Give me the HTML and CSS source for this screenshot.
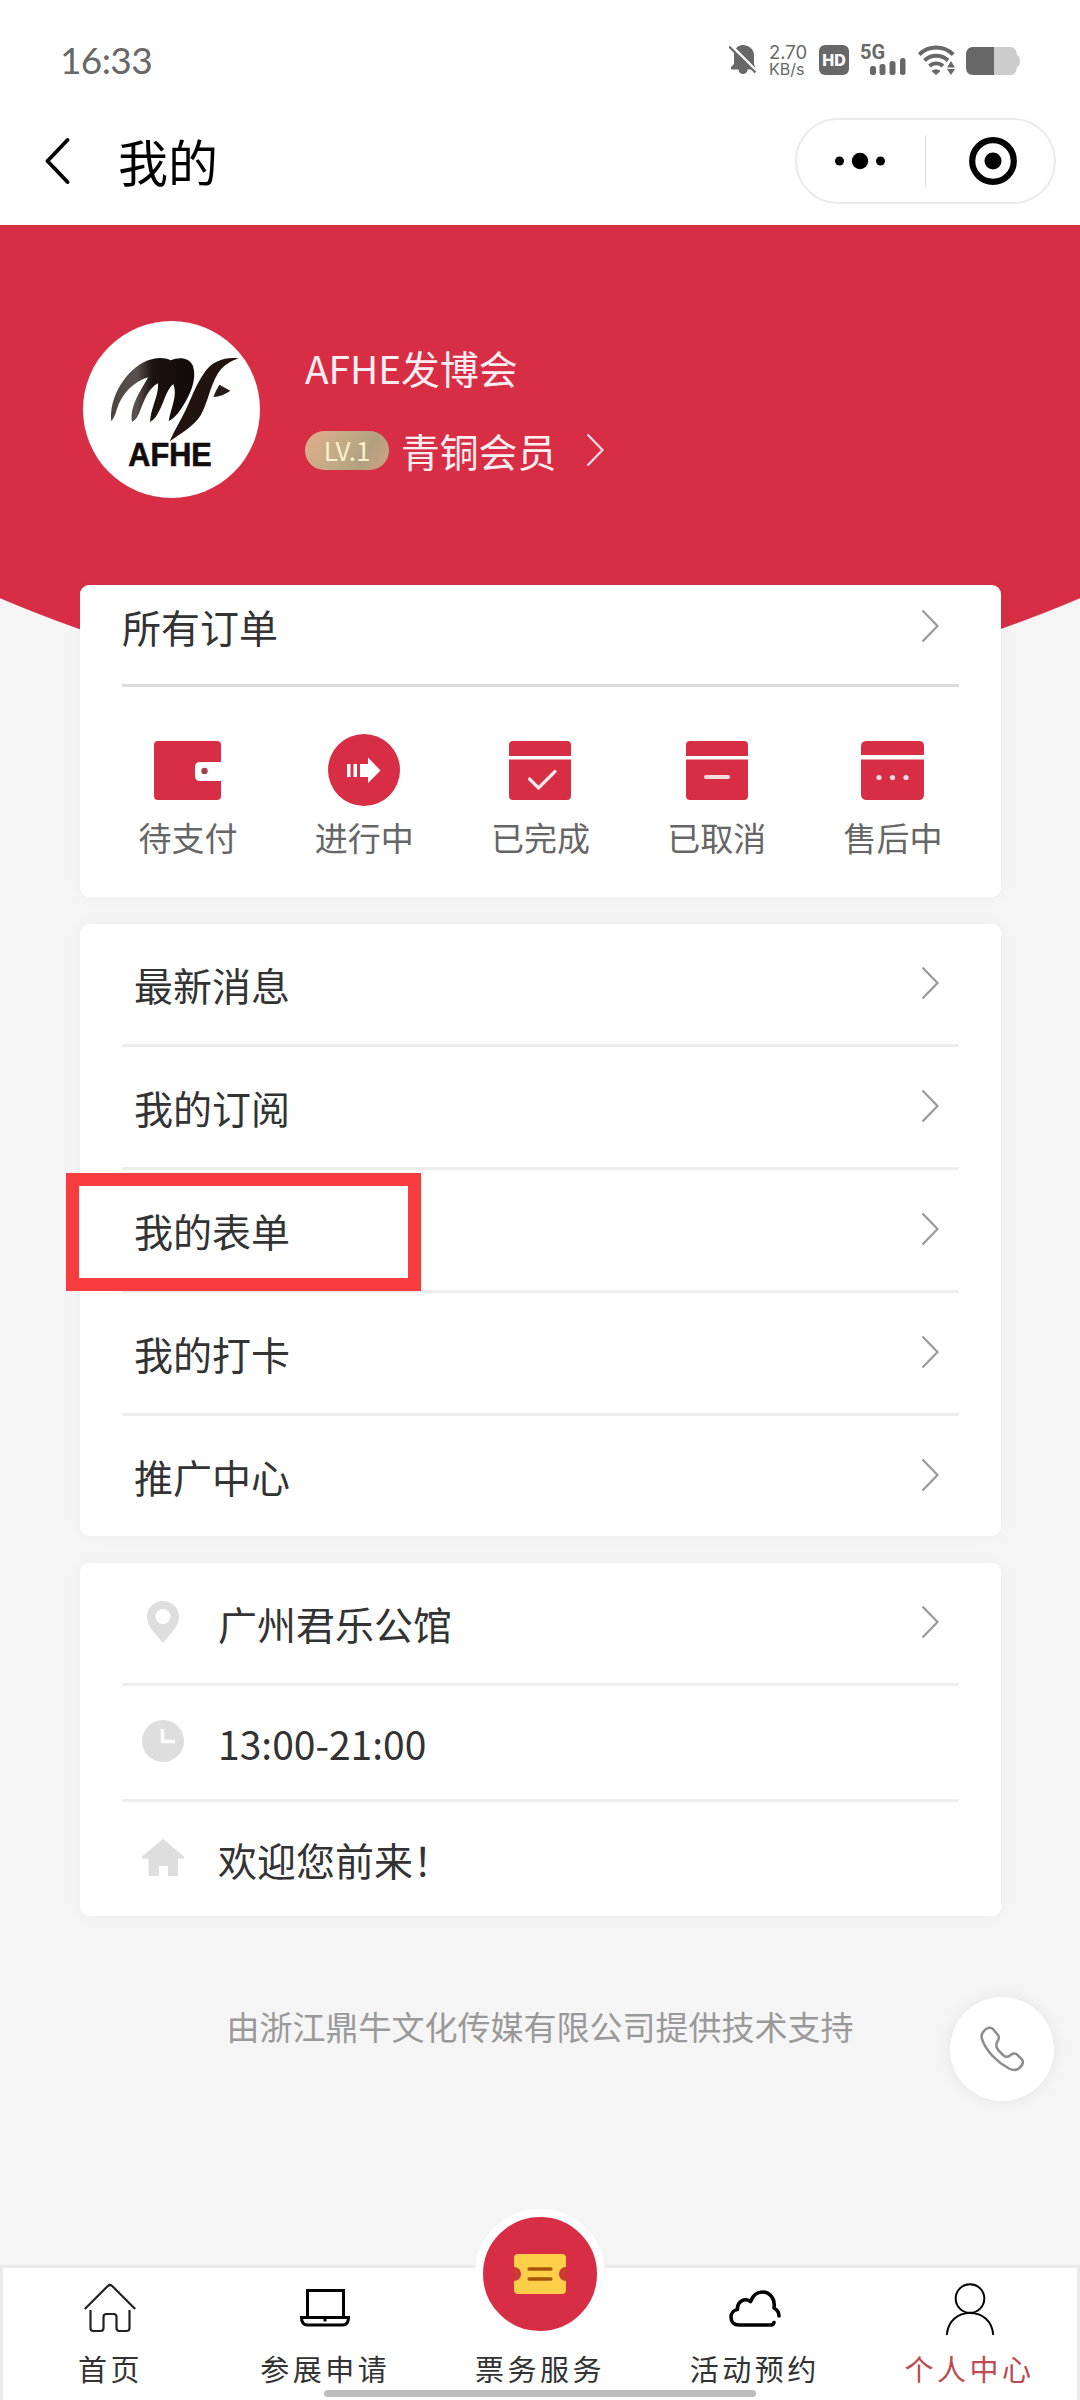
FILE: index.html
```html
<!DOCTYPE html>
<html lang="zh-CN">
<head>
<meta charset="utf-8">
<title>我的</title>
<link rel="stylesheet" href="styles.css">
</head>
<body>
<svg class="sprite" width="0" height="0">
  <symbol id="chevron" viewBox="0 0 18 34"><path d="M1.5 1.5 16.5 17 1.5 32.5" fill="none" stroke="currentColor" stroke-width="2.200"/></symbol>
</svg>
<div class="page">
  <header class="status">
    <span class="clock">16:33</span>
    <div class="indicators">
      <svg class="bell" width="28" height="32" viewBox="0 0 28 32"><path d="M2 25.500V23l3-3V10.500C5 5 9 1 14 1s11 4 11 9.500V20l1 3v2.500H18.500a4.500 4.500 0 0 1-9 0z" fill="#686868"/><path d="M0-.5 29 28.500" stroke="#fff" stroke-width="3"/><path d="M0 2.500 26.500 28.500" stroke="#686868" stroke-width="2.200"/></svg>
      <div class="speed"><span class="rate">2.70</span><span class="unit">KB/s</span></div>
      <span class="hd">HD</span>
      <div class="cell">
        <span class="gen">5G</span>
        <svg class="bars" width="36" height="17" viewBox="0 0 36 17" fill="#686868"><rect x="0" y="8" width="6" height="9" rx="2.500"/><rect x="9.500" y="6" width="6" height="11" rx="2.500"/><rect x="19.500" y="3" width="6" height="14" rx="2.500"/><rect x="30" y="0" width="5.500" height="17" rx="2.500"/></svg>
      </div>
      <svg class="wifi" width="37" height="30" viewBox="0 0 37 30"><g fill="none" stroke="#686868" stroke-width="3.900"><path d="M1.200 9.500a24 24 0 0 1 34 0"/><path d="M6.500 15.500a17 17 0 0 1 23.500 0"/><path d="M11.500 21a10 10 0 0 1 13.500 0"/></g><path d="M13.500 26a7 7 0 0 1 9 0L18 30z" fill="#686868"/><path d="M29 22.500 33 16l4 6.500zM29 24h8l-4 6z" fill="#686868"/></svg>
      <svg class="battery" width="54" height="28" viewBox="0 0 54 28"><path d="M28 0h17q5 0 6 8 3 1 3 6t-3 6q-1 8-6 8H28z" fill="#ccc"/><path d="M28 0H7Q0 0 0 8v12q0 8 7 8h21z" fill="#686868"/></svg>
    </div>
  </header>
  <nav class="titlebar">
    <svg class="back" width="26" height="48" viewBox="0 0 26 48"><path d="M22.500 3 2.500 24l20 21" fill="none" stroke="#000" stroke-width="3.800" stroke-linecap="round" stroke-linejoin="round"/></svg>
    <h1>我的</h1>
    <div class="capsule">
      <svg class="more" width="50" height="18" viewBox="0 0 50 18"><circle cx="4.500" cy="9" r="4.500"/><circle cx="25" cy="9" r="8.200"/><circle cx="45.500" cy="9" r="4.500"/></svg>
      <i class="split"></i>
      <svg class="target" width="48" height="48" viewBox="0 0 48 48"><circle cx="24" cy="24" r="20.800" fill="none" stroke="#000" stroke-width="6.200"/><circle cx="24" cy="24" r="8.500"/></svg>
    </div>
  </nav>
  <main>
    <section class="profile">
      <svg class="avatar" width="177" height="177" viewBox="21 17 531 531">
        <defs><linearGradient id="ink" x1="0" y1="0" x2="1" y2="0"><stop offset="0" stop-color="#4a4440"/><stop offset=".3" stop-color="#5a524e"/><stop offset=".5" stop-color="#1c1210"/><stop offset="1" stop-color="#120a08"/></linearGradient></defs>
        <circle cx="286.500" cy="282.500" r="265.500" fill="#fff"/>
        <path d="M106 318C98 250 145 172 200 142C232 126 262 124 284 135C308 124 340 126 350 150C362 184 350 222 328 260C314 284 298 308 278 317C284 280 306 240 292 206C272 222 266 254 252 282C244 301 234 314 222 320C222 286 250 236 246 204C218 218 206 252 193 284C186 304 178 316 168 319C160 272 196 224 216 186C172 200 136 236 122 284Q116 306 106 318Z" fill="url(#ink)"/>
        <path d="M488 129C446 124 410 138 388 168C358 210 348 246 330 282C314 316 296 344 281 378C314 356 354 332 374 300C396 262 402 212 426 174C442 150 462 138 488 129Z" fill="#201310"/>
        <path d="M430 208 463 226Q440 243 412 245 419 226 430 208Z" fill="#251b18"/>
        <text x="157" y="453" class="brand" textLength="250" lengthAdjust="spacingAndGlyphs">AFHE</text>
      </svg>
      <div class="member">
        <div class="name">AFHE发博会</div>
        <div class="rank"><span class="level">LV.1</span><span>青铜会员</span><svg class="go" width="18" height="34"><use href="#chevron"/></svg></div>
      </div>
    </section>

    <section class="card orders">
      <div class="orders-head"><span>所有订单</span><svg class="go" width="18" height="34"><use href="#chevron"/></svg></div>
      <div class="states">
        <div class="state"><svg width="80" height="80" viewBox="0 0 80 80"><path d="M11 11h58q4 0 4 4v17H52q-5 0-5 5v9q0 5 5 5h21v15q0 4-4 4H10q-4 0-4-4V15q0-4 4-4z" fill="#d72e45"/><circle cx="56.500" cy="41" r="3.200" fill="#a53d51"/></svg><span>待支付</span></div>
        <div class="state"><svg width="80" height="80" viewBox="0 0 80 80"><circle cx="40" cy="40" r="36" fill="#d72e45"/><path d="M23 34h3.500v13H23zM29.500 34H33v13h-3.500zM36 34h8v-6.500L56.500 40.500 44 53v-6h-8z" fill="#fff"/></svg><span>进行中</span></div>
        <div class="state"><svg width="80" height="80" viewBox="0 0 80 80"><path d="M13 11h54q4 0 4 4v11H9V15q0-4 4-4zM9 29.500h62V66q0 4-4 4H13q-4 0-4-4z" fill="#d72e45"/><path d="m29.500 49 9 9L55 41.500" fill="none" stroke="#ffe9ee" stroke-width="3.200" stroke-linecap="round"/></svg><span>已完成</span></div>
        <div class="state"><svg width="80" height="80" viewBox="0 0 80 80"><path d="M13 11h54q4 0 4 4v11H9V15q0-4 4-4zM9 29.500h62V66q0 4-4 4H13q-4 0-4-4z" fill="#d72e45"/><path d="M29 47h22" stroke="#ffd9e0" stroke-width="4" stroke-linecap="round"/></svg><span>已取消</span></div>
        <div class="state"><svg width="80" height="80" viewBox="0 0 80 80"><path d="M14 11h52q5 0 5 5v9H8v-9q0-5 6-5zM8 29.500h63V64q0 6-5 6H14q-6 0-6-6z" fill="#d72e45"/><g fill="#ffd9e0"><circle cx="26" cy="47.500" r="2.600"/><circle cx="39.500" cy="47.500" r="2.600"/><circle cx="53" cy="47.500" r="2.600"/></g></svg><span>售后中</span></div>
      </div>
    </section>

    <section class="card menu">
      <div class="row"><span class="label">最新消息</span><svg class="go" width="18" height="34"><use href="#chevron"/></svg></div>
      <div class="row"><span class="label">我的订阅</span><svg class="go" width="18" height="34"><use href="#chevron"/></svg></div>
      <div class="row marked"><span class="label">我的表单</span><svg class="go" width="18" height="34"><use href="#chevron"/></svg></div>
      <div class="row"><span class="label">我的打卡</span><svg class="go" width="18" height="34"><use href="#chevron"/></svg></div>
      <div class="row"><span class="label">推广中心</span><svg class="go" width="18" height="34"><use href="#chevron"/></svg></div>
    </section>

    <section class="card info">
      <div class="row"><svg class="mark" width="42" height="42" viewBox="0 0 42 42"><path fill-rule="evenodd" d="M21 0c9 0 16 7 16 15.500C37 26 28 33 21 42 14 33 5 26 5 15.500 5 7 12 0 21 0zm0 8a7.500 7.500 0 1 0 0 15 7.500 7.500 0 0 0 0-15z"/></svg><span class="label">广州君乐公馆</span><svg class="go" width="18" height="34"><use href="#chevron"/></svg></div>
      <div class="row"><svg class="mark" width="42" height="42" viewBox="0 0 42 42"><circle cx="21" cy="21" r="21"/><path d="M20.500 9v12.500H33" fill="none" stroke="#fff" stroke-width="3.500"/></svg><span class="label">13:00-21:00</span></div>
      <div class="row"><svg class="mark" width="42" height="42" viewBox="0 0 42 42"><path d="M21 2 42 19.500v2h-6V39H26V29h-9v10H6.500V21.500H0v-2z"/></svg><span class="label">欢迎您前来！</span></div>
    </section>

    <p class="support">由浙江鼎牛文化传媒有限公司提供技术支持</p>
  </main>

  <footer class="tabs">
    <div class="tab"><svg width="52" height="52" viewBox="0 0 52 52" fill="none" stroke="#222" stroke-width="2.200"><path d="M.8 26 23.800 3q2.200-2 4.400 0l23 23"/><path d="M6.500 27v18q0 3 3 3h7q3 0 3-3V34q0-3 3-3h7q3 0 3 3v11q0 3 3 3h7q3 0 3-3V27"/></svg><span>首页</span></div>
    <div class="tab"><svg width="52" height="52" viewBox="0 0 52 52" fill="none" stroke="#000" stroke-width="3"><path d="M8.500 34V7.500h36V34"/><path d="M2.500 34.500h47q0 7.500-6 7.500h-35q-6 0-6-7.500z"/><path d="M26 34v4.500" stroke-width="3"/></svg><span>参展申请</span></div>
    <div class="tab tickets"><div class="bubble"><svg width="52" height="40" viewBox="0 0 52 40"><path d="M4 0h44q4 0 4 4v9a6.500 6.500 0 0 0 0 14v9q0 4-4 4H4q-4 0-4-4v-9a6.500 6.500 0 0 0 0-14V4q0-4 4-4z" fill="#ffcf4a"/><path d="M0 14.500q6 5.500 0 11M52 14.500q-6 5.500 0 11" fill="#d72e45" stroke="#b5540f" stroke-width="2"/><path d="M15 15h22M15 25h22" stroke="#a8560c" stroke-width="3.300" stroke-linecap="round"/></svg></div><span>票务服务</span></div>
    <div class="tab"><svg width="52" height="52" viewBox="0 0 52 52" fill="none" stroke="#000" stroke-width="3.600" stroke-linecap="round" stroke-linejoin="round"><path d="M45 39.500q-.5 2.500-3 2.500H10c-5 0-8-3-8-8 0-4 3-7 6.500-7.500C8 18 16 14.500 21.500 18.500 24 12 29 9 33.500 9 41 9 46.500 16 45 25q5 3 5 8"/></svg><span>活动预约</span></div>
    <div class="tab active"><svg width="52" height="52" viewBox="0 0 52 52" fill="none" stroke="#000" stroke-width="2"><circle cx="26" cy="15.500" r="14.300"/><path d="M2.800 52c1-14 11-22 23.200-22s22.500 8 23.200 22"/></svg><span>个人中心</span></div>
  </footer>
  <button class="phone" aria-label="电话"><svg width="44" height="46" viewBox="0 0 44 46"><path d="M4 5C7 1 11 1 13 3l5 6c1.500 2 1 4-.5 6.500-2 3-2 5.500 1 9l5 5c2.500 2 4 2 6.500 0 2.500-2.500 5-2.500 7-1l5 5c1.500 2 1 5-2 8-3 3-7 3-11 1C17 36 6 25 2 13 1 10 2 7 4 5z" fill="none" stroke="#8e8e8e" stroke-width="2.500"/></svg></button>
  <i class="home-indicator"></i>
</div>
</body>
</html>
```
FILE: styles.css
```css
*, *::before { box-sizing: border-box; }
body { margin: 0; background: #f5f5f5; font-family: "Noto Sans CJK SC", sans-serif; color: #333; }
svg { display: block; flex: none; }
.sprite { position: absolute; }
.page { position: relative; width: 1080px; height: 2400px; display: flex; flex-direction: column; overflow: hidden; }

.status { height: 100px; padding: 20px 60px 0; background: #fff; display: flex; justify-content: space-between; align-items: center; color: #686868; }
.clock { font: 37px/40px Lato, sans-serif; letter-spacing: -.6px; }
.indicators { display: flex; align-items: center; height: 32px; }
.speed { display: flex; flex-direction: column; margin-left: 12px; width: 38px; font-family: Inter, sans-serif; }
.rate { font-size: 18.500px; line-height: 17px; }
.unit { font-size: 16px; line-height: 16px; }
.hd { margin-left: 12px; width: 30px; height: 30px; border-radius: 6px; background: #686868; color: #fff; font: 800 16px/30px Inter, sans-serif; text-align: center; }
.cell { margin-left: 11px; width: 46px; height: 32px; }
.gen { display: block; font: 700 20px/16px Roboto, sans-serif; height: 14px; }
.bars { margin-left: 10px; }
.wifi { margin-left: 12px; }
.battery { margin: 2px 0 0 11px; }

.titlebar { height: 125px; padding: 0 24px 3px 45px; background: #fff; display: flex; align-items: center; }
h1 { margin: 0 auto 3px 47px; font-size: 50px; line-height: 60px; font-weight: 400; color: #000; }
.capsule { width: 261px; height: 86px; border: 2px solid #ebebeb; border-radius: 43px; display: flex; align-items: center; padding: 0 37px 0 38px; justify-content: space-between; }
.split { width: 1px; height: 52px; background: #ddd; margin: 0 4px 0 0; }

main { flex: 1; background: radial-gradient(circle at 540px -900px, #d72e45 1382.500px, #f5f5f5 1383.500px); }
.profile { height: 360px; padding: 96px 83px 0; display: flex; align-items: flex-start; gap: 45px; color: #ffeef1; }
.brand { font: 700 98px "Liberation Sans", Arial, sans-serif; fill: #120c0c; stroke: #120c0c; stroke-width: 2px; }
.member { height: 174px; display: flex; flex-direction: column; justify-content: center; gap: 33px; font-size: 38.800px; line-height: 50px; }
.rank { display: flex; align-items: center; }
.level { width: 84px; height: 39px; margin: 2px 12px 0 0; border-radius: 20px; background: linear-gradient(120deg, #e0ac8c, #c2aa86 45%, #b0a07f 70%, #cfa283); color: #fbf0cf; font-size: 26px; line-height: 37px; text-align: center; }
.rank .go { margin-left: 30px; }

.card { width: 921px; margin-left: 80px; background: #fff; border-radius: 9px; box-shadow: 0 0 16px rgba(0, 0, 0, .035); font-size: 39px; line-height: 50px; }
.go { color: #999; }
.profile .go { color: #ffdfe5; }
.orders { height: 312px; }
.orders-head { margin: 0 42px; padding: 0 20px 17px 0; height: 102px; border-bottom: 3px solid #ddd; display: flex; justify-content: space-between; align-items: center; }
.states { padding: 43px 20px 0; display: grid; grid-template-columns: repeat(5, 1fr); }
.state { display: flex; flex-direction: column; align-items: center; gap: 7px; color: #666; font-size: 33px; line-height: 40px; }

.menu { margin-top: 27px; height: 612px; }
.row { margin: 0 42px; padding: 0 20px 0 12px; height: 123px; border-bottom: 3px solid #ededed; display: flex; align-items: center; }
.label { margin-right: auto; }
.row .go { margin-top: -3px; }
.row:last-child { border: 0; height: 120px; }
.marked { position: relative; }
.marked::before { content: ""; position: absolute; left: -56px; top: 3px; width: 355px; height: 118px; border: 13px solid #f93c40; }
.info { margin-top: 27px; height: 353px; }
.info .row { padding-left: 20px; gap: 34px; }
.info .row:nth-child(2) { height: 116px; }
.info .row:last-child { height: 114px; }
.mark { fill: #dedede; margin-top: -3px; }
.support { margin: 85px 0 0; text-align: center; font-size: 33px; line-height: 50px; color: #999; }

.tabs { height: 135px; border: 3px solid #ebebeb; border-bottom: 0; background: #fff; display: grid; grid-template-columns: repeat(5, 1fr); }
.tab { display: flex; flex-direction: column; align-items: center; padding-top: 15px; font-size: 29px; line-height: 40px; letter-spacing: 3.500px; }
.tab span { margin-top: 13px; }
.tab.active { color: #bd4b52; }
.tickets { padding: 0; }
.bubble { width: 130px; height: 130px; margin-top: -59px; border: 8px solid #fff; border-radius: 50%; background: #d72e45; display: flex; align-items: center; justify-content: center; }
.tickets span { margin-top: 9px; }

.phone { position: absolute; left: 950px; top: 1997px; width: 104px; height: 104px; padding: 0; border: 0; border-radius: 50%; background: #fff; box-shadow: 0 0 16px rgba(0, 0, 0, .07); display: flex; align-items: center; justify-content: center; }
.home-indicator { position: absolute; left: 324px; top: 2390px; width: 432px; height: 7px; border-radius: 4px; background: #bdbdbd; }
```
